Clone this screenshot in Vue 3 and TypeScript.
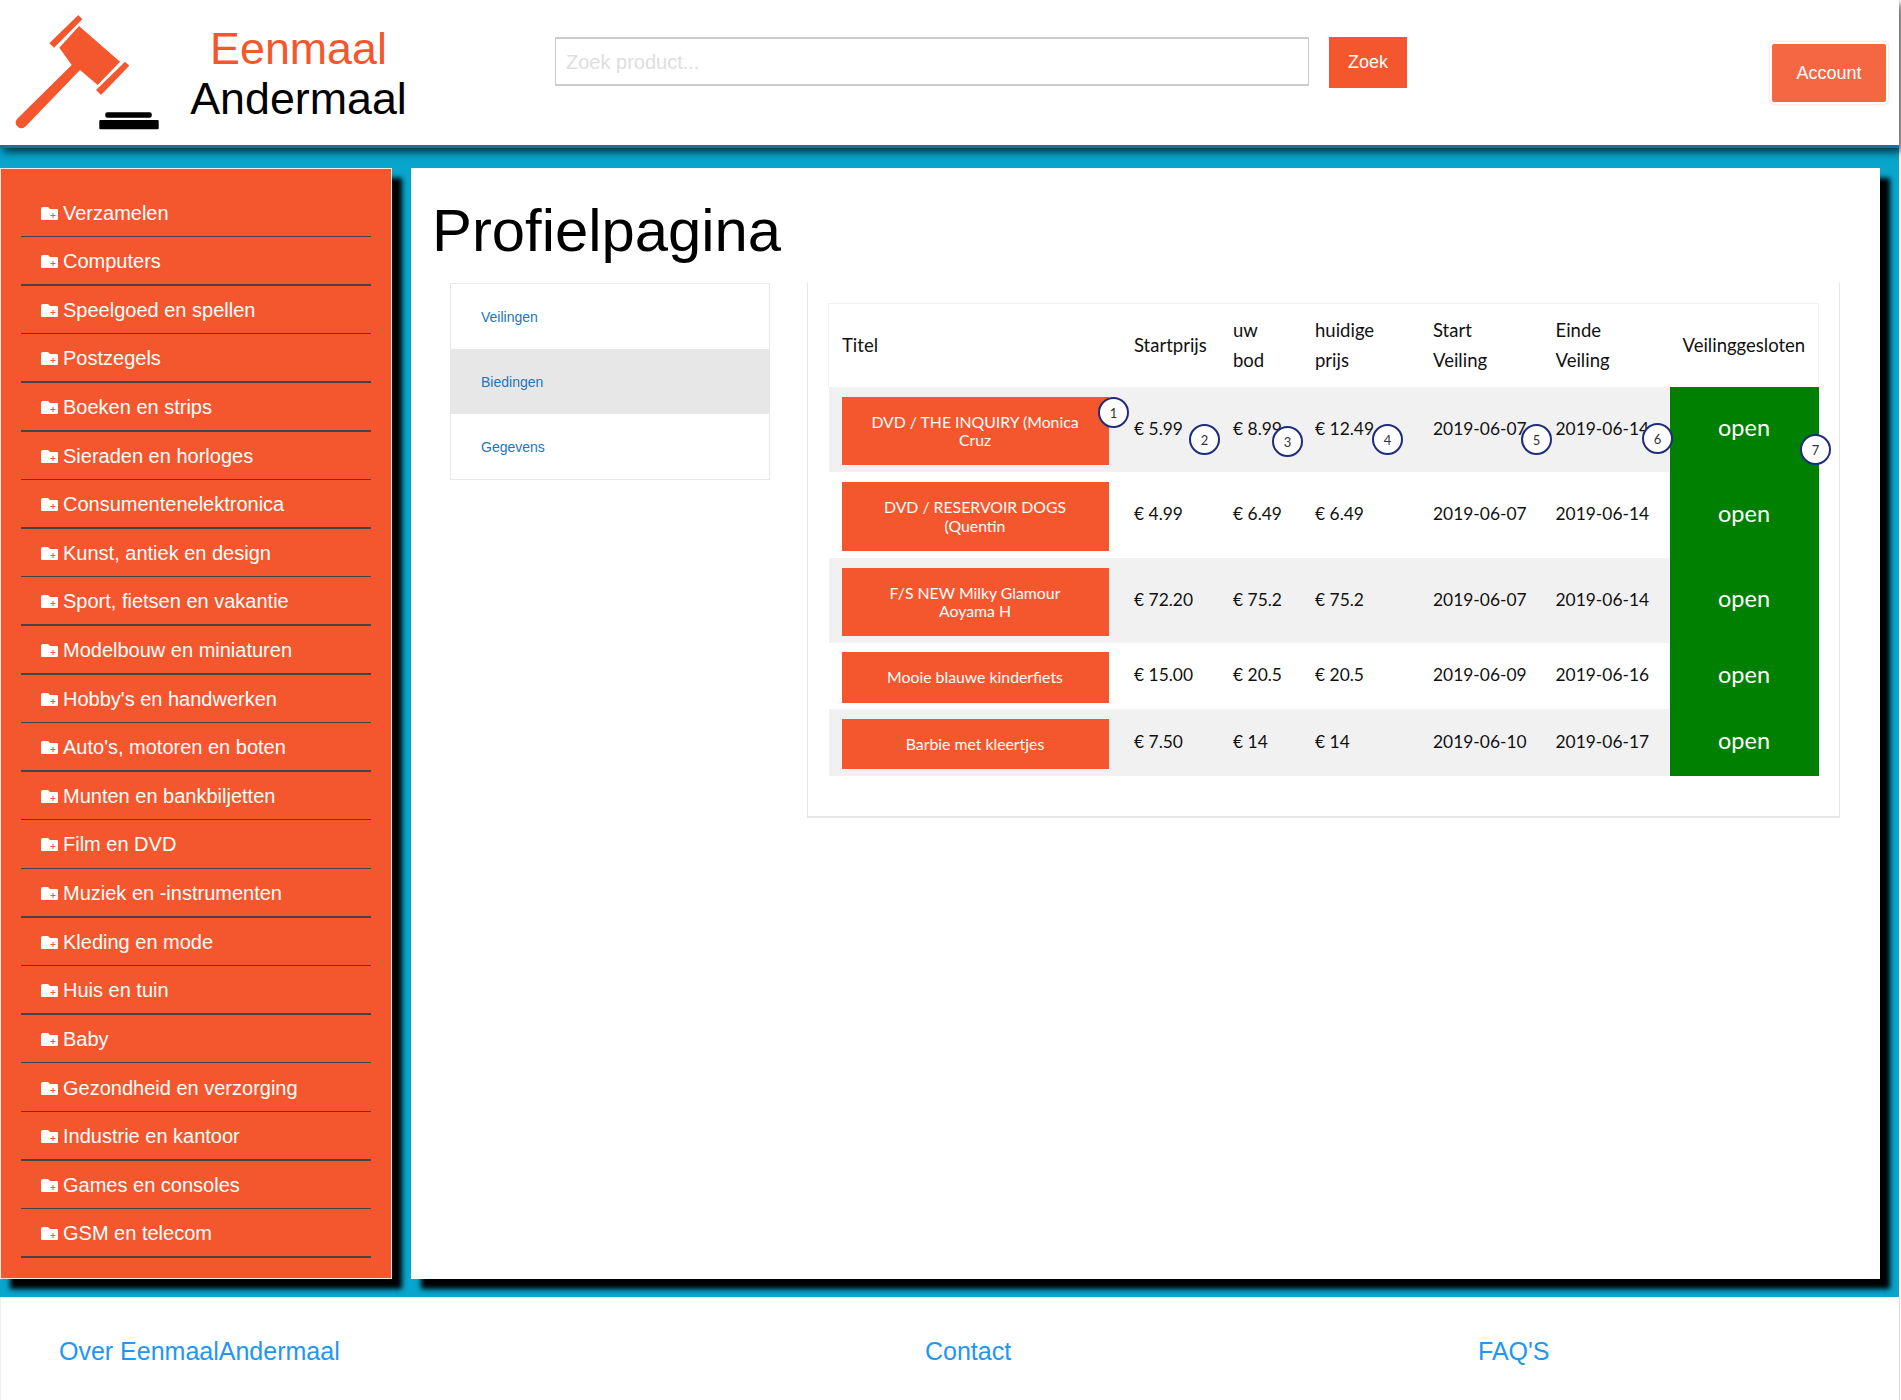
<script setup lang="ts">
interface Bid {
  title: string
  start: string
  bid: string
  current: string
  opens: string
  closes: string
}

const categories = [
  'Verzamelen', 'Computers', 'Speelgoed en spellen', 'Postzegels', 'Boeken en strips',
  'Sieraden en horloges', 'Consumentenelektronica', 'Kunst, antiek en design',
  'Sport, fietsen en vakantie', 'Modelbouw en miniaturen', "Hobby's en handwerken",
  "Auto's, motoren en boten", 'Munten en bankbiljetten', 'Film en DVD',
  'Muziek en -instrumenten', 'Kleding en mode', 'Huis en tuin', 'Baby',
  'Gezondheid en verzorging', 'Industrie en kantoor', 'Games en consoles', 'GSM en telecom',
]

const tabs = ['Veilingen', 'Biedingen', 'Gegevens']

const bids: Bid[] = [
  { title: 'DVD / THE INQUIRY (Monica Cruz', start: '€ 5.99', bid: '€ 8.99', current: '€ 12.49', opens: '2019-06-07', closes: '2019-06-14' },
  { title: 'DVD / RESERVOIR DOGS (Quentin', start: '€ 4.99', bid: '€ 6.49', current: '€ 6.49', opens: '2019-06-07', closes: '2019-06-14' },
  { title: 'F/S NEW Milky Glamour Aoyama H', start: '€ 72.20', bid: '€ 75.2', current: '€ 75.2', opens: '2019-06-07', closes: '2019-06-14' },
  { title: 'Mooie blauwe kinderfiets', start: '€ 15.00', bid: '€ 20.5', current: '€ 20.5', opens: '2019-06-09', closes: '2019-06-16' },
  { title: 'Barbie met kleertjes', start: '€ 7.50', bid: '€ 14', current: '€ 14', opens: '2019-06-10', closes: '2019-06-17' },
]

// Numbered markers lie over the first row, centres are relative to the table
const markers = [
  { n: 1, x: 285, y: 109 },
  { n: 2, x: 376, y: 136 },
  { n: 3, x: 459, y: 138 },
  { n: 4, x: 559, y: 136 },
  { n: 5, x: 708, y: 136 },
  { n: 6, x: 829, y: 135 },
  { n: 7, x: 987, y: 146 },
]
</script>

<template>
  <div class="page">
    <header class="topbar">
      <div class="logo">
        <svg class="gavel" viewBox="0 0 165 135" aria-hidden="true">
          <path class="gavel-head" d="M49.300 43.300 L78.300 15 L82.300 19.300 L54 47.700 Z" />
          <path class="gavel-head" d="M59.300 47.700 L79 26 L120 61.700 L97.700 85 L80 70 L25 127 Q21 129.500 18 127 L16 124.500 Q14.500 121.500 18 118 L71.700 65 Z" />
          <path class="gavel-head" d="M96 90 L125 61.700 L129.300 65.700 L101 95 Z" />
          <rect x="105.300" y="112.300" width="46.400" height="5.400" rx="2" />
          <rect x="99.300" y="120" width="59.400" height="9.300" rx="1" />
        </svg>
        <div class="wordmark">
          <span class="word-top">Eenmaal</span>
          <span>Andermaal</span>
        </div>
      </div>
      <form class="search" @submit.prevent>
        <input class="search-input" type="text" placeholder="Zoek product..." />
        <button class="search-btn" type="submit">Zoek</button>
      </form>
      <button class="account" type="button">Account</button>
    </header>

    <div class="body-row">
      <aside class="sidebar">
        <a v-for="cat in categories" :key="cat" class="cat" href="#">
          <span class="cat-label">
            <svg class="folder" viewBox="0 0 17 13" aria-hidden="true">
              <path fill="#fff" d="M0 2 Q0 0 2 0 H7 L9 2 H16 Q17 2 17 3 V12 Q17 13 16 13 H1 Q0 13 0 12 Z" />
              <path stroke="#f4572d" stroke-width="1" d="M9.500 8.500 H14.500 M12 6 V11" />
            </svg>
            {{ cat }}
          </span>
          <span class="cat-rule"></span>
        </a>
      </aside>

      <main class="main">
        <h1 class="title">Profielpagina</h1>
        <div class="profile">
          <nav class="tabs">
            <a
              v-for="tab in tabs"
              :key="tab"
              class="tab"
              :class="{ active: tab === 'Biedingen' }"
              href="#"
            >{{ tab }}</a>
          </nav>

          <section class="panel">
            <div class="table-wrap">
              <table class="bids">
                <colgroup>
                  <col class="c-title" />
                  <col class="c-start" />
                  <col class="c-bid" />
                  <col class="c-current" />
                  <col class="c-opens" />
                  <col class="c-closes" />
                  <col class="c-status" />
                </colgroup>
                <thead>
                  <tr>
                    <th>Titel</th>
                    <th>Startprijs</th>
                    <th>uw<br />bod</th>
                    <th>huidige<br />prijs</th>
                    <th>Start<br />Veiling</th>
                    <th>Einde<br />Veiling</th>
                    <th>Veilinggesloten</th>
                  </tr>
                </thead>
                <tbody>
                  <tr v-for="row in bids" :key="row.title">
                    <td class="title-cell"><a class="bid-btn" href="#">{{ row.title }}</a></td>
                    <td>{{ row.start }}</td>
                    <td>{{ row.bid }}</td>
                    <td>{{ row.current }}</td>
                    <td>{{ row.opens }}</td>
                    <td>{{ row.closes }}</td>
                    <td class="status">open</td>
                  </tr>
                </tbody>
              </table>
              <span
                v-for="m in markers"
                :key="m.n"
                class="marker"
                :style="{ left: `${m.x - 15}px`, top: `${m.y - 15}px` }"
              >{{ m.n }}</span>
            </div>
          </section>
        </div>
      </main>
    </div>

    <footer class="footer">
      <a href="#">Over EenmaalAndermaal</a>
      <a href="#">Contact</a>
      <a href="#">FAQ'S</a>
    </footer>
  </div>
</template>

<style scoped>
.page {
  width: 1899px;
  font-family: "Liberation Sans", Arial, sans-serif;
}

.topbar {
  position: relative;
  z-index: 2;
  display: flex;
  height: 145px;
  background: #fff;
  border-bottom: 3px solid #1c6ea4;
  box-shadow: 3px 4px 8px rgba(0, 0, 0, 0.7);
}

.logo {
  display: flex;
  width: 555px;
  flex-shrink: 0;
}

.gavel {
  width: 165px;
  height: 135px;
  fill: #000;
}

.gavel-head {
  fill: #f4572d;
}

.wordmark {
  display: flex;
  flex-direction: column;
  align-items: center;
  width: 267px;
  padding-top: 23px;
  font-size: 44.800px;
  line-height: 50px;
  color: #000;
}

.word-top {
  color: #f4572d;
}

.search {
  display: flex;
  gap: 20px;
  margin-top: 37px;
  height: 51px;
}

.search-input {
  width: 754px;
  height: 49px;
  box-sizing: border-box;
  padding: 1px 10px 0;
  border: 1px solid #ccc;
  border-top-width: 2px;
  border-bottom-width: 2px;
  outline: none;
  font: 20px "Liberation Sans", Arial, sans-serif;
}

.search-input::placeholder {
  color: #dedede;
}

.search-btn {
  width: 78px;
  height: 51px;
  padding: 0;
  border: none;
  background: #f4572d;
  color: #fff;
  font: 18px "Liberation Sans", Arial, sans-serif;
}

.account {
  width: 114px;
  height: 58px;
  margin: 44px 13px 0 auto;
  border: none;
  border-radius: 2px;
  background: #f56642;
  box-shadow: 0 0 0 2px #fff, 0 0 2px 3px #fbe4de;
  color: #fff;
  font: 18px "Liberation Sans", Arial, sans-serif;
}

.body-row {
  display: flex;
  gap: 19px;
  padding: 20px 19px 18px 0;
  background: #08a5cc;
}

.sidebar {
  display: flex;
  flex-direction: column;
  width: 392px;
  height: 1111px;
  box-sizing: border-box;
  padding: 19.500px 20px 0;
  border: 1px solid #fbe8e2;
  background: #f4572d;
  box-shadow: 10px 10px 5px #000;
}

.cat {
  display: flex;
  flex-direction: column;
  color: #fff;
  font-size: 20px;
  text-decoration: none;
}

.cat-label {
  display: flex;
  align-items: center;
  gap: 5px;
  height: 45.110px;
  padding: 2px 0 0 20px;
}

.folder {
  width: 17px;
  height: 13px;
  flex-shrink: 0;
}

.cat-rule {
  height: 1.500px;
  background: #444;
}

.main {
  width: 1469px;
  height: 1111px;
  box-sizing: border-box;
  background: #fff;
  box-shadow: 10px 10px 5px #000;
}

.title {
  margin: 0;
  padding: 30px 0 0 21px;
  height: 85px;
  font-size: 59.800px;
  font-weight: 400;
  line-height: 66px;
  color: #000;
  box-sizing: content-box;
}

.profile {
  display: flex;
  align-items: flex-start;
  padding: 0 39px 0 39px;
  gap: 37px;
}

.tabs {
  display: flex;
  flex-direction: column;
  width: 320px;
  flex-shrink: 0;
  box-sizing: border-box;
  border: 1px solid #e7e7e7;
}

.tab {
  display: flex;
  align-items: center;
  height: 65px;
  padding-left: 30px;
  font-size: 14px;
  color: #2176bd;
  text-decoration: none;
}

.tab.active {
  background: #e7e7e7;
}

.panel {
  width: 1033px;
  box-sizing: border-box;
  padding: 20px 21px 40px 20px;
  border: 1px solid #e7e7e7;
  border-top: none;
  border-bottom-width: 2px;
}

.table-wrap {
  position: relative;
}

.bids {
  width: 990px;
  table-layout: fixed;
  border-collapse: collapse;
  font-family: Lato, "Open Sans", sans-serif;
  font-size: 17.400px;
  color: #111;
}

.c-title { width: 292.500px; }
.c-start { width: 99px; }
.c-bid { width: 82px; }
.c-current { width: 118px; }
.c-opens { width: 122.500px; }
.c-closes { width: 127px; }
.c-status { width: 149px; }

.bids thead tr {
  height: 83px;
  border: 1px solid #f2f2f2;
  border-bottom: none;
}

.bids th {
  padding: 0 0 0 13px;
  font-size: 18.500px;
  font-weight: 400;
  line-height: 30px;
  text-align: left;
  white-space: nowrap;
  overflow: visible;
}

.bids td {
  padding: 0 0 2px 13px;
}

.bids .title-cell {
  padding: 4px 0 0 13px;
}

.bids tbody tr:nth-child(odd) {
  background: #f1f1f1;
}

.bids tbody tr:nth-child(1) { height: 85px; }
.bids tbody tr:nth-child(2) { height: 86px; }
.bids tbody tr:nth-child(3) { height: 85px; }
.bids tbody tr:nth-child(4) { height: 66px; }
.bids tbody tr:nth-child(5) { height: 67px; }

.bids .status {
  padding: 0 0 4px;
  background: #008000;
  color: #fff;
  font-size: 23.500px;
  text-align: center;
}

.bid-btn {
  display: block;
  width: 267px;
  box-sizing: border-box;
  padding: 16px 26px;
  background: #f4572d;
  color: #fff;
  font-size: 15.800px;
  line-height: 18.300px;
  text-align: center;
  text-decoration: none;
}

.marker {
  position: absolute;
  display: flex;
  align-items: center;
  justify-content: center;
  width: 31px;
  height: 31px;
  box-sizing: border-box;
  border: 2px solid #1d2c7c;
  border-radius: 50%;
  background: #fff;
  font-family: Lato, sans-serif;
  font-size: 13px;
  color: #333;
}

.footer {
  display: grid;
  grid-template-columns: 866px 553px 1fr;
  width: 1900px;
  height: 104px;
  box-sizing: border-box;
  padding: 38px 0 0 58px;
  border-left: 1px solid #eee;
  border-right: 1px solid #ddd;
  font-size: 25px;
  line-height: 32px;
}

.footer a {
  color: #2196f3;
  text-decoration: none;
}
</style>

<style>
html,
body {
  margin: 0;
  background: #fff;
}
</style>
